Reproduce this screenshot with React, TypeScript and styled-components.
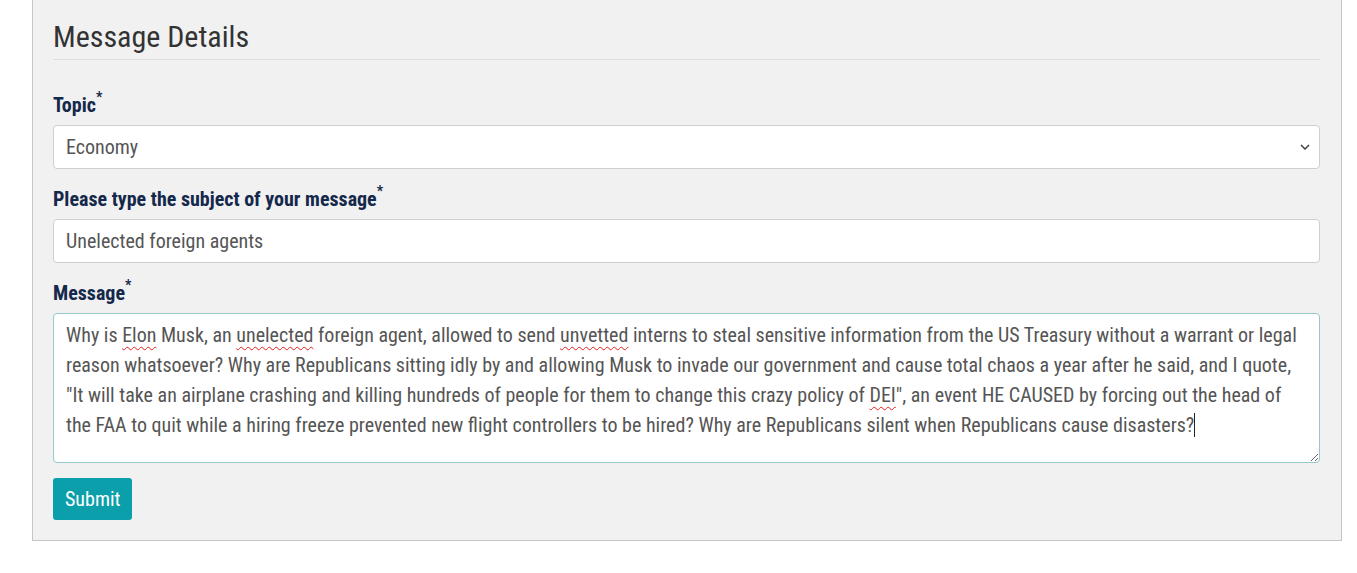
import React from 'react'
import styled, { createGlobalStyle } from 'styled-components'

const GlobalStyle = createGlobalStyle`
  body {
    margin: 0;
    background: #ffffff;
    font-family: "Roboto Condensed", Roboto, "Liberation Sans", sans-serif;
  }
`

const Panel = styled('section')`
  margin-left: 32px;
  width: 1310px;
  box-sizing: border-box;
  background: #f1f1f1;
  border: 1px solid #c6c6c6;
  border-top: none;
  padding: 19px 21px 20px 20px;
`
const Title = styled('h2')`
  margin: 0;
  font-size: 30px;
  font-weight: 400;
  line-height: 36px;
  color: #333333;
`
const Rule = styled('hr')`
  margin: 4px 0 0 0;
  border: 0;
  border-top: 1px solid #dedede;
`
const Group = styled('div')<{ $first?: boolean }>`
  display: flex;
  flex-direction: column;
  margin-top: ${(p) => (p.$first ? '30px' : '15px')};
`
const Label = styled('label')`
  font-size: 20px;
  font-weight: 700;
  line-height: 30px;
  color: #14284b;
  margin-bottom: 5px;

  sup {
    font-size: 14px;
    line-height: 0;
    position: relative;
    top: -2px;
  }
`
const Select = styled('select')`
  height: 44px;
  box-sizing: border-box;
  border: 1px solid #cfcfcf;
  border-radius: 4px;
  background: #ffffff;
  font: inherit;
  font-size: 20px;
  color: #555555;
  padding: 0 12px;
  appearance: none;
  background-image: url("data:image/svg+xml,%3Csvg xmlns='http://www.w3.org/2000/svg' width='10' height='6' viewBox='0 0 10 6'%3E%3Cpath d='M1 1l4 4 4-4' fill='none' stroke='%23444' stroke-width='1.5'/%3E%3C/svg%3E");
  background-repeat: no-repeat;
  background-position: right 9px center;
`
const Input = styled('input')`
  height: 44px;
  box-sizing: border-box;
  border: 1px solid #cfcfcf;
  border-radius: 4px;
  background: #ffffff;
  font: inherit;
  font-size: 20px;
  color: #555555;
  padding: 0 12px;
`
const MessageBox = styled('div')`
  height: 150px;
  box-sizing: border-box;
  border: 1px solid #95c7cb;
  border-radius: 4px;
  background: #ffffff;
  font-size: 20px;
  line-height: 30px;
  color: #555555;
  padding: 6px 12px 7px;
  overflow: auto;
  resize: vertical;
`
const Typo = styled('span')`
  text-decoration: underline wavy #e0201c;
  text-decoration-thickness: 1px;
  text-underline-offset: 4px;
`
const Caret = styled('span')`
  display: inline-block;
  width: 0;
  height: 24px;
  border-left: 1px solid #222;
  vertical-align: -5px;
`
const SubmitButton = styled('button')`
  align-self: flex-start;
  margin-top: 15px;
  height: 42px;
  padding: 0 12px;
  border: 0;
  border-radius: 3px;
  background: #0b9fab;
  color: #ffffff;
  font: inherit;
  font-size: 20px;
`
const Form = styled('form')`
  display: flex;
  flex-direction: column;
`

export default function App() {
  return (
    <>
      <GlobalStyle />
      <Panel>
        <Title>Message Details</Title>
        <Rule />
        <Form onSubmit={(e) => e.preventDefault()}>
          <Group $first>
            <Label>Topic<sup>*</sup></Label>
            <Select defaultValue="Economy">
              <option>Economy</option>
            </Select>
          </Group>
          <Group>
            <Label>Please type the subject of your message<sup>*</sup></Label>
            <Input defaultValue="Unelected foreign agents" />
          </Group>
          <Group>
            <Label>Message<sup>*</sup></Label>
            <MessageBox role="textbox">
              Why is <Typo>Elon</Typo> Musk, an <Typo>unelected</Typo> foreign agent, allowed to send <Typo>unvetted</Typo> interns
              to steal sensitive information from the US Treasury without a warrant or legal reason whatsoever? Why are
              Republicans sitting idly by and allowing Musk to invade our government and cause total chaos a year after he
              said, and I quote, "It will take an airplane crashing and killing hundreds of people for them to change this
              crazy policy of <Typo>DEI</Typo>", an event HE CAUSED by forcing out the head of the FAA to quit while a hiring
              freeze prevented new flight controllers to be hired? Why are Republicans silent when Republicans cause
              disasters?<Caret />
            </MessageBox>
          </Group>
          <SubmitButton type="submit">Submit</SubmitButton>
        </Form>
      </Panel>
    </>
  )
}
